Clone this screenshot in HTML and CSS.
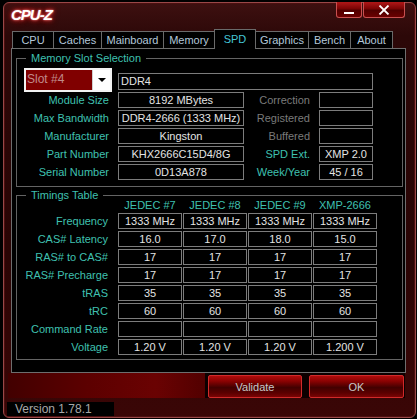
FILE: index.html
```html
<!DOCTYPE html>
<html lang="en">
<head>
    <meta charset="UTF-8">
    <title>CPU-Z</title>
    <link rel="stylesheet" href="styles.css">
</head>
<body>
    <div class="window">
        <div class="titlebar">
            <span class="title">CPU-Z</span>
            <div class="caption">
                <button class="cap min"><span class="bar"></span></button>
                <button class="cap close">
                    <svg width="12" height="10" viewBox="0 0 12 10"><path d="M1.5 0.5 L10.5 9.5 M10.5 0.5 L1.5 9.5" stroke="#fff" stroke-width="1.8"/></svg>
                </button>
            </div>
        </div>
        <div class="tabs">
            <div class="tab" style="width:42px">CPU</div>
            <div class="tab" style="width:49px">Caches</div>
            <div class="tab" style="width:63px">Mainboard</div>
            <div class="tab" style="width:52px">Memory</div>
            <div class="tab active" style="width:42px">SPD</div>
            <div class="tab" style="width:54px">Graphics</div>
            <div class="tab" style="width:43px">Bench</div>
            <div class="tab" style="width:43px">About</div>
        </div>
        <div class="panel">
            <fieldset class="group mem">
                <legend>Memory Slot Selection</legend>
                <div class="mem-grid">
                    <div class="select"><span class="sel-text">Slot #4</span><span class="sel-arrow"></span></div>
                    <div class="box type">DDR4</div>

                    <div class="lbl">Module Size</div>
                    <div class="box">8192 MBytes</div>
                    <div class="lbl off">Correction</div>
                    <div class="box"></div>

                    <div class="lbl">Max Bandwidth</div>
                    <div class="box">DDR4-2666 (1333 MHz)</div>
                    <div class="lbl off">Registered</div>
                    <div class="box"></div>

                    <div class="lbl">Manufacturer</div>
                    <div class="box">Kingston</div>
                    <div class="lbl off">Buffered</div>
                    <div class="box"></div>

                    <div class="lbl">Part Number</div>
                    <div class="box">KHX2666C15D4/8G</div>
                    <div class="lbl">SPD Ext.</div>
                    <div class="box">XMP 2.0</div>

                    <div class="lbl">Serial Number</div>
                    <div class="box">0D13A878</div>
                    <div class="lbl">Week/Year</div>
                    <div class="box">45 / 16</div>
                </div>
            </fieldset>
            <fieldset class="group timings">
                <legend>Timings Table</legend>
                <div class="tim-grid">
                    <div></div>
                    <div class="head">JEDEC #7</div>
                    <div class="head">JEDEC #8</div>
                    <div class="head">JEDEC #9</div>
                    <div class="head">XMP-2666</div>

                    <div class="lbl">Frequency</div>
                    <div class="box">1333 MHz</div><div class="box">1333 MHz</div><div class="box">1333 MHz</div><div class="box">1333 MHz</div>

                    <div class="lbl">CAS# Latency</div>
                    <div class="box">16.0</div><div class="box">17.0</div><div class="box">18.0</div><div class="box">15.0</div>

                    <div class="lbl">RAS# to CAS#</div>
                    <div class="box">17</div><div class="box">17</div><div class="box">17</div><div class="box">17</div>

                    <div class="lbl">RAS# Precharge</div>
                    <div class="box">17</div><div class="box">17</div><div class="box">17</div><div class="box">17</div>

                    <div class="lbl">tRAS</div>
                    <div class="box">35</div><div class="box">35</div><div class="box">35</div><div class="box">35</div>

                    <div class="lbl">tRC</div>
                    <div class="box">60</div><div class="box">60</div><div class="box">60</div><div class="box">60</div>

                    <div class="lbl">Command Rate</div>
                    <div class="box"></div><div class="box"></div><div class="box"></div><div class="box"></div>

                    <div class="lbl">Voltage</div>
                    <div class="box">1.20 V</div><div class="box">1.20 V</div><div class="box">1.20 V</div><div class="box">1.200 V</div>
                </div>
            </fieldset>
        </div>
        <div class="footer">
            <div class="band"></div>
            <div class="actions">
                <button class="btn validate">Validate</button>
                <button class="btn ok">OK</button>
            </div>
        </div>
        <div class="version">Version 1.78.1</div>
    </div>
</body>
</html>
```

FILE: styles.css
```css
html, body {
  margin: 0;
  background: #000;
}
body {
  width: 417px;
  height: 419px;
  overflow: hidden;
  font-family: "Liberation Sans", Arial, sans-serif;
  font-size: 11px;
}
.window {
  margin: 2px 0 0 3px;
  width: 413px;
  height: 416px;
  box-sizing: border-box;
  border: 1px solid #9a4848;
  border-radius: 6px;
  background: linear-gradient(to bottom, #3e1010 0%, #2c0808 8%, #2a0404 60%, #3a0606 100%);
  box-shadow: inset 0 0 0 1px #4a1010;
}
.titlebar {
  display: flex;
  align-items: flex-start;
  height: 26px;
}
.title {
  margin: 3px 0 0 7px;
  font-size: 15px;
  font-weight: bold;
  font-style: italic;
  letter-spacing: -1px;
  color: #fff;
  text-shadow: 0 0 2px #ffa0a0, 0 0 4px #e03030, 0 0 7px #b00000;
}
.caption {
  display: flex;
  gap: 1px;
  margin: -1px 10px 0 auto;
}
.cap {
  height: 16px;
  padding: 0;
  border: 1px solid #c85050;
  border-top: 0;
  border-radius: 0 0 3px 3px;
  background: linear-gradient(to bottom, #b01818, #7a0404 45%, #500000 55%, #6a0000);
  display: flex;
  align-items: center;
  justify-content: center;
}
.cap.min {
  width: 26px;
  align-items: flex-end;
  padding-bottom: 3px;
}
.cap.min .bar {
  width: 10px;
  height: 2px;
  background: #fff;
}
.cap.close {
  width: 42px;
}
.tabs {
  display: flex;
  align-items: flex-end;
  height: 19px;
  margin-left: 8px;
}
.tab {
  height: 17px;
  box-sizing: border-box;
  margin-right: -1px;
  border: 1px solid #6a6a6a;
  border-bottom: 0;
  background: #000;
  color: #b4c8da;
  text-align: center;
  line-height: 17px;
}
.tab.active {
  position: relative;
  z-index: 1;
  height: 20px;
  margin-bottom: -1px;
  color: #44c6d6;
  line-height: 19px;
}
.panel {
  margin-left: 7px;
  width: 395px;
  height: 325px;
  box-sizing: border-box;
  border: 1px solid #6e6e6e;
  background: #000;
  padding-left: 4px;
}
.group {
  width: 387px;
  box-sizing: border-box;
  min-width: 0;
  margin: 3px 0 0;
  padding: 0;
  border: 1px solid #646464;
}
.group legend {
  margin-left: 9px;
  padding: 0 5px;
  line-height: 12px;
  color: #3fc0b0;
}
.timings {
  margin-top: 2px;
}
.lbl {
  color: #3fc0b0;
  text-align: right;
  line-height: 16px;
  white-space: nowrap;
}
.lbl.off {
  color: #7a7a7a;
}
.box {
  box-sizing: border-box;
  border: 1px solid #7c7c7c;
  color: #e4e4e4;
  text-align: center;
  line-height: 14px;
  white-space: nowrap;
  overflow: hidden;
}
.mem-grid {
  display: grid;
  grid-template-columns: 92px 126px 57px 54px;
  grid-template-rows: 22px repeat(5, 16px);
  column-gap: 9px;
  row-gap: 2px;
  padding: 4px 0 6px;
}
.select {
  align-self: start;
  display: flex;
  width: 88px;
  height: 24px;
  margin-left: 7px;
  box-sizing: border-box;
  border: 2px solid #f2f2f2;
  background: #800000;
}
.sel-text {
  flex: 1;
  padding-left: 1px;
  line-height: 18px;
  color: #c08a8a;
  font-size: 12px;
}
.sel-arrow {
  width: 17px;
  background: #fff;
  border-left: 1px solid #d0d0d0;
  position: relative;
}
.sel-arrow::after {
  content: "";
  position: absolute;
  left: 5px;
  top: 8px;
  border-left: 4px solid transparent;
  border-right: 4px solid transparent;
  border-top: 4px solid #000;
}
.box.type {
  grid-column: 2 / 5;
  align-self: end;
  height: 17px;
  text-align: left;
  padding-left: 2px;
  line-height: 15px;
}
.tim-grid {
  display: grid;
  grid-template-columns: 100px repeat(4, 64px);
  grid-template-rows: 12px repeat(8, 16px);
  column-gap: 1px;
  row-gap: 2px;
  margin-top: -2px;
  padding-bottom: 4px;
}
.tim-grid .lbl {
  padding-right: 9px;
}
.head {
  color: #3fc0b0;
  text-align: center;
  line-height: 12px;
}
.footer {
  display: flex;
  height: 25px;
  margin-left: 4px;
}
.band {
  width: 197px;
  background: linear-gradient(to right, #420000, #5c0000 40%, #6a0202 75%, #520000);
}
.actions {
  display: flex;
  gap: 7px;
  width: 200px;
  padding: 2px 0 0 3px;
  box-sizing: border-box;
  background: #0c0000;
}
.btn {
  height: 23px;
  padding: 0;
  border: 1px solid #d02a2a;
  border-radius: 2px;
  background: linear-gradient(to bottom, #b00c0c 0%, #8a0202 25%, #420000 55%, #5a0000 80%, #7a0404 100%);
  color: #c8c8c8;
  font-family: "Liberation Sans", Arial, sans-serif;
  font-size: 11px;
}
.validate {
  width: 94px;
}
.ok {
  width: 95px;
}
.version {
  width: 99px;
  height: 14px;
  margin: 4px 0 0 3px;
  padding-left: 8px;
  background: #000;
  color: #a8a8a8;
  font-size: 12px;
  line-height: 14px;
}
```
